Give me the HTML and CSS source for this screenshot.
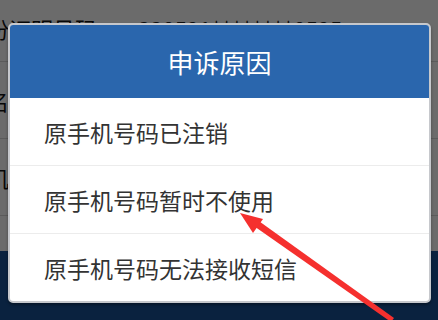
FILE: index.html
```html
<!DOCTYPE html>
<html lang="zh">
<head>
<meta charset="utf-8">
<link rel="stylesheet" href="styles.css">
</head>
<body>
<div class="page">
  <div class="row"><span class="label">身份证明号码</span><span class="value">330521********0525</span></div>
  <div class="row"><span class="label">姓名</span></div>
  <div class="row"><span class="label">手机</span></div>
  <div class="spacer"></div>
  <div class="footer"></div>
</div>
<div class="overlay">
  <div class="dialog">
    <div class="dialog-title">申诉原因</div>
    <div class="option">原手机号码已注销</div>
    <div class="option">原手机号码暂时不使用</div>
    <div class="option">原手机号码无法接收短信</div>
  </div>
</div>
<svg class="arrow" width="438" height="320" viewBox="0 0 438 320">
  <polygon points="251,224 256,219 394,318 391,322" fill="#f5302e"/>
  <polygon points="240,213 263,219 253,233" fill="#f5302e"/>
</svg>
</body>
</html>
```
FILE: styles.css
```css
html, body {
  margin: 0;
  padding: 0;
}
body {
  width: 438px;
  height: 320px;
  overflow: hidden;
  position: relative;
  font-family: "Noto Sans CJK SC", "Noto Sans", sans-serif;
  background: #fff;
}
.page {
  display: flex;
  flex-direction: column;
  height: 320px;
}
.row {
  height: 76px;
  border-bottom: 1px solid #d8d8d8;
  display: flex;
  align-items: center;
  margin-left: -35px;
  font-size: 22px;
  color: #111;
  flex-shrink: 0;
}
.row:first-child {
  height: 62px;
  align-items: flex-start;
  padding-top: 12px;
  box-sizing: border-box;
}
.label {
  width: 173px;
}
.value {
  color: #222;
}
.spacer {
  height: 35px;
  flex-shrink: 0;
}
.footer {
  flex: 1;
  background: #1a5296;
}
.overlay {
  position: absolute;
  inset: 0;
  background: rgba(0, 0, 0, 0.58);
  display: flex;
  justify-content: center;
  align-items: flex-start;
  padding-top: 23px;
  padding-left: 1px;
  box-sizing: border-box;
}
.dialog {
  width: 423px;
  background: #fff;
  border: 2px solid #c6c8cc;
  border-radius: 5px;
  box-sizing: border-box;
  overflow: hidden;
  box-shadow: 0 2px 3px rgba(0, 0, 0, 0.35);
}
.dialog-title {
  height: 73px;
  background: #2a66ad;
  color: #fff;
  font-size: 26px;
  display: flex;
  align-items: center;
  justify-content: center;
}
.option {
  height: 67px;
  display: flex;
  align-items: center;
  padding-left: 34px;
  font-size: 23px;
  color: #333;
  border-top: 1px solid #ececec;
}
.option:nth-child(2) {
  border-top: none;
}
.arrow {
  position: absolute;
  left: 0;
  top: 0;
}
```
